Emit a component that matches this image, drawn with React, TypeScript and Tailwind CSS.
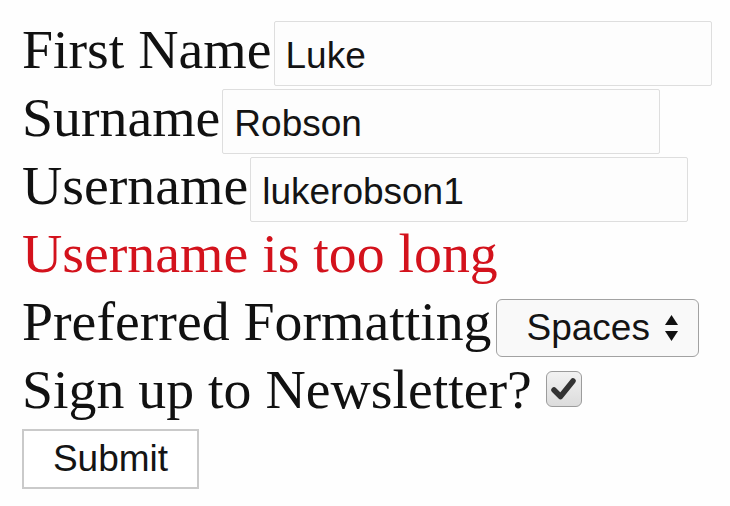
import React from "react";

const serif = { fontFamily: '"Liberation Serif", "Times New Roman", serif' };
const sans = { fontFamily: '"Liberation Sans", Arial, sans-serif' };

function Label({ children, red }: { children: React.ReactNode; red?: boolean }) {
  return (
    <span
      className={`text-[55.8px] leading-[68px] whitespace-nowrap ${red ? "text-[#d3121c]" : "text-[#111111]"}`}
      style={serif}
    >
      {children}
    </span>
  );
}

function TextInput({ value }: { value: string }) {
  return (
    <input
      type="text"
      defaultValue={value}
      className="ml-[2px] w-[438px] h-[65px] border border-[#dedede] rounded-[2px] bg-[#fdfdfd] pl-[11px] pt-[6px] pb-0 text-[37px] leading-normal text-[#141414] outline-none"
      style={sans}
    />
  );
}

export default function App() {
  return (
    <div className="min-h-[506px] w-[730px] bg-[#fefefe] pt-[15px] pl-[22px]">
      <form className="flex flex-col" onSubmit={(e) => e.preventDefault()}>
        <div className="flex h-[68px] items-baseline">
          <Label>First Name</Label>
          <TextInput value="Luke" />
        </div>
        <div className="flex h-[68px] items-baseline">
          <Label>Surname</Label>
          <TextInput value="Robson" />
        </div>
        <div className="flex h-[68px] items-baseline">
          <Label>Username</Label>
          <TextInput value="lukerobson1" />
        </div>
        <div className="flex h-[68px] items-baseline">
          <Label red>Username is too long</Label>
        </div>
        <div className="flex h-[68px] items-baseline">
          <Label>Preferred Formatting</Label>
          <div
            className="relative ml-[5px] flex h-[58px] w-[203px] items-center rounded-[6px] border-[1.5px] border-[#a2a2a2] bg-[#f9f9f9] pl-[29px] text-[37px] leading-normal text-[#141414]"
            style={sans}
          >
            <span>Spaces</span>
            <svg
              className="absolute right-[19px] top-1/2 -translate-y-1/2"
              width="15"
              height="30"
              viewBox="0 0 15 30"
            >
              <polygon points="7.5,2 14,12 1,12" fill="#111" />
              <polygon points="1,18 14,18 7.5,28" fill="#111" />
            </svg>
          </div>
        </div>
        <div className="flex h-[68px] items-baseline">
          <Label>Sign up to Newsletter?</Label>
          <span className="ml-[14px] flex h-[36px] w-[36px] items-center justify-center self-center rounded-[6px] border-[1.5px] border-[#9c9c9c] bg-gradient-to-b from-[#f2f2f2] to-[#dcdcdc]">
            <svg width="28" height="26" viewBox="0 0 28 26">
              <path
                d="M4 14 L10.5 20.5 L23 5"
                fill="none"
                stroke="#333"
                strokeWidth="5.5"
                strokeLinecap="round"
                strokeLinejoin="round"
              />
            </svg>
          </span>
        </div>
        <div className="flex pt-[6px]">
          <button
            type="submit"
            className="h-[60px] w-[177px] border-2 border-[#cacaca] bg-white text-[37px] leading-normal text-[#141414]"
            style={sans}
          >
            Submit
          </button>
        </div>
      </form>
    </div>
  );
}
